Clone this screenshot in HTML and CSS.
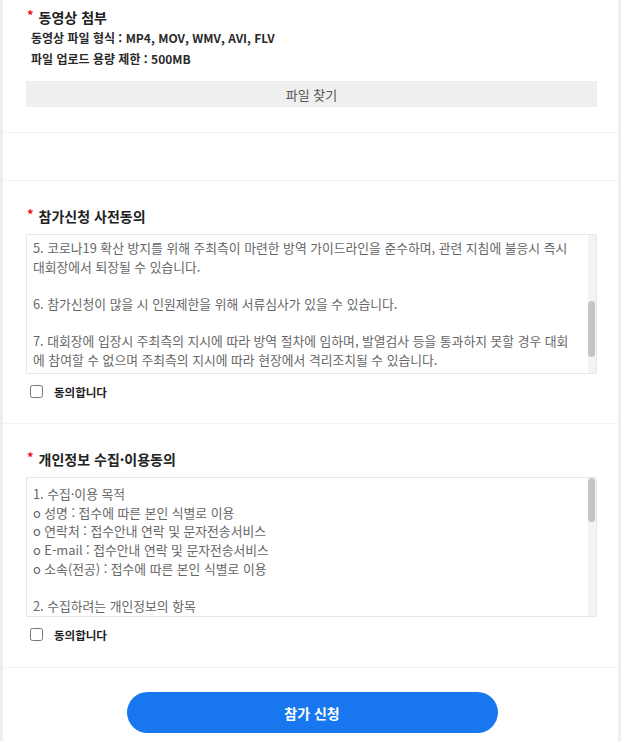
FILE: index.html
```html
<!DOCTYPE html>
<html lang="ko">
<head>
<meta charset="utf-8">
<title>참가 신청</title>
<link rel="stylesheet" href="styles.css">
</head>
<body>
<div class="page">
  <section class="sec sec-file">
    <h2 class="title"><span class="req">*</span>동영상 첨부</h2>
    <p class="info">동영상 파일 형식 : MP4, MOV, WMV, AVI, FLV</p>
    <p class="info">파일 업로드 용량 제한 : 500MB</p>
    <button class="file-btn" type="button">파일 찾기</button>
  </section>

  <section class="sec sec-empty"></section>

  <section class="sec sec-terms">
    <h2 class="title"><span class="req">*</span>참가신청 사전동의</h2>
    <div class="scrollbox">
      <div class="scroll-text scroll-text-end">
        <p>5. 코로나19 확산 방지를 위해 주최측이 마련한 방역 가이드라인을 준수하며, 관련 지침에 불응시 즉시<br>대회장에서 퇴장될 수 있습니다.</p>
        <p>6. 참가신청이 많을 시 인원제한을 위해 서류심사가 있을 수 있습니다.</p>
        <p>7. 대회장에 입장시 주최측의 지시에 따라 방역 절차에 임하며, 발열검사 등을 통과하지 못할 경우 대회<br>에 참여할 수 없으며 주최측의 지시에 따라 현장에서 격리조치될 수 있습니다.</p>
      </div>
      <div class="track"><div class="thumb thumb-low"></div></div>
    </div>
    <label class="agree"><input type="checkbox" class="agree-box"><span>동의합니다</span></label>
  </section>

  <section class="sec sec-terms sec-terms-last">
    <h2 class="title"><span class="req">*</span>개인정보 수집·이용동의</h2>
    <div class="scrollbox">
      <div class="scroll-text scroll-text-top">
        <p>1. 수집·이용 목적<br>o 성명 : 접수에 따른 본인 식별로 이용<br>o 연락처 : 접수안내 연락 및 문자전송서비스<br>o E-mail : 접수안내 연락 및 문자전송서비스<br>o 소속(전공) : 접수에 따른 본인 식별로 이용</p>
        <p>2. 수집하려는 개인정보의 항목</p>
      </div>
      <div class="track"><div class="thumb thumb-top"></div></div>
    </div>
    <label class="agree"><input type="checkbox" class="agree-box"><span>동의합니다</span></label>
  </section>

  <section class="sec sec-submit">
    <button class="submit-btn" type="button">참가 신청</button>
  </section>
</div>
</body>
</html>
```

FILE: styles.css
```css
* { box-sizing: border-box; }

html, body {
  margin: 0;
  padding: 0;
}

body {
  background: #eceef3;
  font-family: "Noto Sans CJK KR", "Noto Sans", "Liberation Sans", sans-serif;
  color: #222;
}

.page {
  margin: 0 3px;
  background: #fff;
  min-height: 741px;
}

.sec {
  padding: 0 22px 0 23px;
  border-bottom: 1px solid #f3f3f6;
}

.sec-file {
  padding-top: 7px;
  padding-bottom: 25px;
}

.sec-empty {
  height: 48px;
}

.sec-terms {
  padding-top: 25px;
  padding-bottom: 22px;
}

.sec-terms-last {
  padding-bottom: 23px;
}

.title {
  margin: 0;
  padding-left: 1px;
  font-size: 14px;
  line-height: 20px;
  font-weight: 700;
  color: #222;
  display: flex;
  align-items: flex-start;
}

.req {
  color: #e8141c;
  font-size: 13px;
  line-height: 16px;
  margin-right: 5px;
}

.info {
  margin: 0;
  padding-left: 5px;
  font-size: 12px;
  line-height: 21px;
  font-weight: 700;
  color: #2a2a2a;
}

.file-btn {
  display: block;
  width: 571px;
  height: 26px;
  margin-top: 12px;
  border: 0;
  background: #efefef;
  font-family: inherit;
  font-size: 13px;
  color: #555;
  padding: 0;
}

.scrollbox {
  margin-top: 8px;
  width: 571px;
  height: 140px;
  border: 1px solid #e6e6ef;
  display: flex;
  background: #fff;
}

.scroll-text {
  flex: 1;
  overflow: hidden;
  padding-left: 6px;
  font-size: 12.8px;
  line-height: 18.67px;
  color: #666;
  white-space: nowrap;
}

.scroll-text-end { padding-top: 4px; }
.scroll-text-top { padding-top: 7px; }

.scroll-text p {
  margin: 0 0 18.67px;
}

.track {
  width: 8px;
  background: #f3f3f3;
  display: flex;
  flex-direction: column;
}

.thumb {
  width: 7px;
  background: #c4c4c4;
  border-radius: 4px;
}

.thumb-low {
  margin-top: 66px;
  height: 56px;
}

.thumb-top {
  height: 44px;
}

.agree {
  display: flex;
  align-items: center;
  height: 19px;
  margin-top: 8px;
  padding-left: 4px;
  font-size: 11.5px;
  font-weight: 700;
  color: #222;
}

.agree-box {
  width: 13px;
  height: 13px;
  margin: 0 11px 0 0;
}

.sec-submit {
  border-bottom: 0;
  padding-top: 24px;
  display: flex;
  justify-content: center;
}

.submit-btn {
  width: 371px;
  height: 41px;
  border: 0;
  border-radius: 21px;
  background: #1877ee;
  color: #fff;
  font-family: inherit;
  font-size: 14px;
  font-weight: 700;
  margin-left: 2px;
}
```
